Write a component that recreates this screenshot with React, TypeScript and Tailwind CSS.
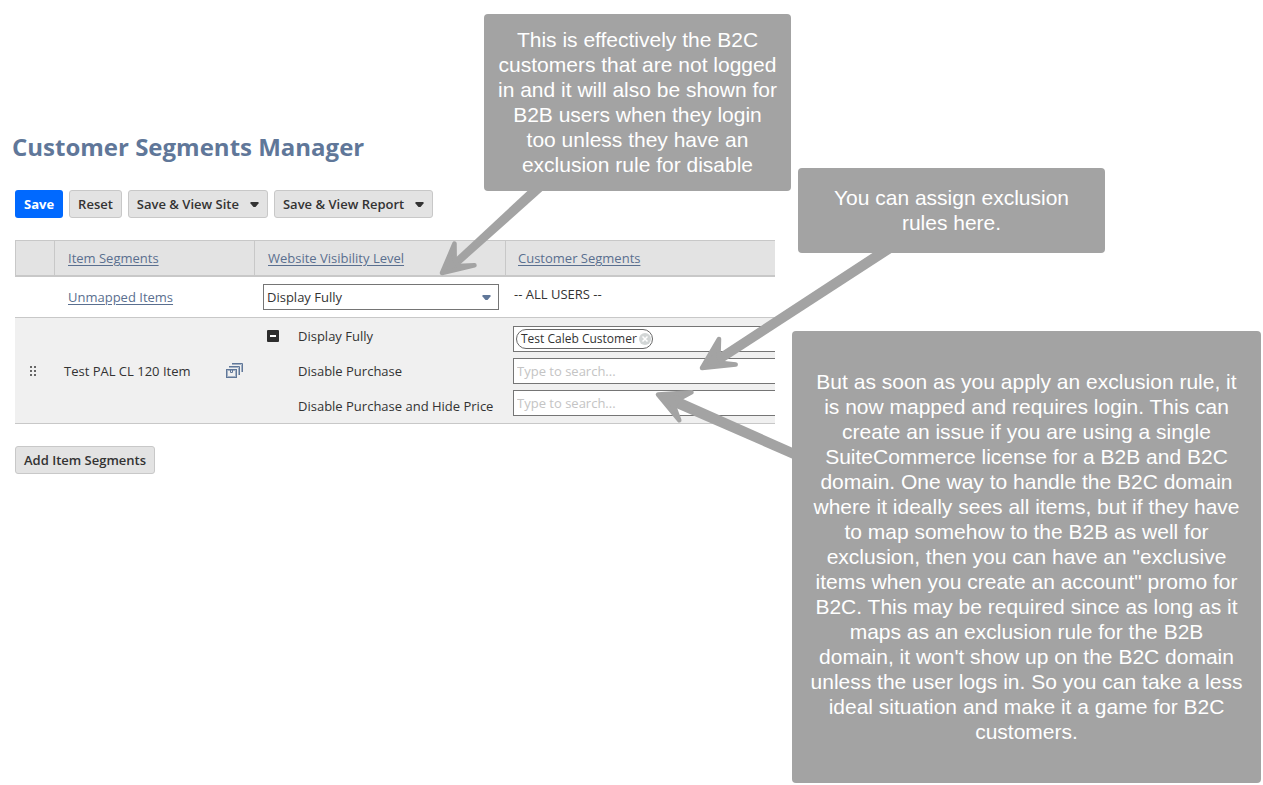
import { useState } from "react";

interface CalloutProps {
  className: string;
  lines: string[];
}

const menuButtons = ["Save & View Site", "Save & View Report"];

const visibilityLevels = ["Display Fully", "Disable Purchase", "Disable Purchase and Hide Price"];

const visibilityNote = [
  "This is effectively the B2C",
  "customers that are not logged",
  "in and it will also be shown for",
  "B2B users when they login",
  "too unless they have an",
  "exclusion rule for disable",
];

const assignNote = ["You can assign exclusion", "rules here."];

const exclusionNote = [
  "But as soon as you apply an exclusion rule, it",
  "is now mapped and requires login. This can",
  "create an issue if you are using a single",
  "SuiteCommerce license for a B2B and B2C",
  "domain. One way to handle the B2C domain",
  "where it ideally sees all items, but if they have",
  "to map somehow to the B2B as well for",
  "exclusion, then you can have an \"exclusive",
  "items when you create an account\" promo for",
  "B2C. This may be required since as long as it",
  "maps as an exclusion rule for the B2B",
  "domain, it won't show up on the B2C domain",
  "unless the user logs in. So you can take a less",
  "ideal situation and make it a game for B2C",
  "customers.",
];

function Caret({ className }: { className: string }) {
  return (
    <svg viewBox="0 0 9 5" className={className} aria-hidden="true">
      <path d="M0.5 0H8.5V1.5L5.5 5H3.5L0.5 1.5Z" fill="currentColor" />
    </svg>
  );
}

function StackIcon() {
  return (
    <svg viewBox="0 0 17 15" className="h-[15px] w-[17px]" fill="none" aria-hidden="true">
      <path d="M6 1.5H15.5V9" stroke="#a3b1c4" />
      <path d="M6 0.5H16.5V9" stroke="#607799" />
      <path d="M3 4.5H12.5V12" stroke="#a3b1c4" />
      <path d="M3 3.5H13.5V12" stroke="#607799" />
      <rect x="1.5" y="7.5" width="8" height="6" stroke="#a3b1c4" />
      <rect x="0.5" y="6.5" width="10" height="8" stroke="#607799" />
      <path d="M4.5 7V9.5H6.5V7" stroke="#607799" />
    </svg>
  );
}

function DragHandle() {
  return (
    <svg viewBox="0 0 6 10" className="h-2.5 w-1.5" fill="#666" aria-hidden="true">
      <path d="M0 0h2v2H0zM4 0h2v2H4zM0 4h2v2H0zM4 4h2v2H4zM0 8h2v2H0zM4 8h2v2H4z" />
    </svg>
  );
}

function Callout({ className, lines }: CalloutProps) {
  return (
    <aside
      className={`absolute flex items-center justify-center rounded bg-[#a3a3a3] pb-0.5 text-center font-['Liberation_Sans',sans-serif] text-[21px] leading-[25px] text-white ${className}`}
    >
      <p className="whitespace-pre-line">{lines.join("\n")}</p>
    </aside>
  );
}

function Arrows() {
  return (
    <svg
      viewBox="0 0 1263 785"
      className="pointer-events-none absolute left-0 top-0 h-[785px] w-[1263px] max-w-none"
      fill="#a3a3a3"
      aria-hidden="true"
    >
      <path d="M528.5 190L543.5 190L460 264.5L448 268L456.5 257Z" />
      <path d="M874 252L893 252L725 361L712 364L720.5 352.5Z" />
      <path d="M793 448L793 459L675.5 407.7L666 398L678.5 397Z" />
      <g stroke="#a3a3a3" strokeWidth="4.5" strokeLinejoin="round">
        <path d="M442 273L454.5 243.5L454.7 260L458 266L474.5 265.3Z" />
        <path d="M702 368L719 339L718.5 356L722 363L735.7 364.5Z" />
        <path d="M658 394.5L691.5 392.3L679 399L674 406L679.3 420.3Z" />
      </g>
    </svg>
  );
}

export default function App() {
  const [visibility, setVisibility] = useState("Display Fully");
  const [expanded, setExpanded] = useState(true);
  const [customers, setCustomers] = useState(["Test Caleb Customer"]);

  const headerLink = "text-[#5a6f8f] underline underline-offset-2";
  const secondaryButton =
    "flex h-7 items-center rounded-[3px] border border-[#c8c8c8] bg-[#e3e3e3] px-2 font-semibold text-[#333]";

  return (
    <div className="relative min-h-screen overflow-hidden bg-white font-['Open_Sans',sans-serif] text-[13px] leading-5 text-[#333]">
      <main className="pl-[15px] pr-[488px] pt-[130px]">
        <h1 className="-ml-[3px] text-2xl leading-[34px] font-bold text-[#607799]">Customer Segments Manager</h1>

        <div className="mt-[26px] flex gap-1.5">
          <button type="button" className="h-7 rounded-[3px] bg-[#0069ff] px-[9px] font-bold text-white">
            Save
          </button>
          <button type="button" className={secondaryButton}>
            Reset
          </button>
          {menuButtons.map((label) => (
            <button key={label} type="button" aria-haspopup="menu" className={secondaryButton}>
              {label}
              <Caret className="ml-[11px] h-[5px] w-[9px]" />
            </button>
          ))}
        </div>

        <table className="mt-[22px] w-full table-fixed border-separate border-spacing-0">
          <colgroup>
            <col className="w-[39px]" />
            <col className="w-[200px]" />
            <col className="w-[251px]" />
            <col />
          </colgroup>
          <thead>
            <tr className="h-[37px] bg-[#e3e3e3] text-left *:border-t *:border-b-2 *:border-[#c8c8c8] *:font-normal">
              <th className="border-l" aria-label="Order" />
              <th className="border-l pl-[13px]">
                <a href="#item-segments" className={headerLink}>Item Segments</a>
              </th>
              <th className="border-l pl-[13px]">
                <a href="#visibility" className={headerLink}>Website Visibility Level</a>
              </th>
              <th className="border-l pl-3">
                <a href="#customer-segments" className={headerLink}>Customer Segments</a>
              </th>
            </tr>
          </thead>
          <tbody>
            <tr className="h-[41px] *:border-b *:border-[#c8c8c8]">
              <td />
              <td className="pl-3.5">
                <a href="#unmapped" className={headerLink}>Unmapped Items</a>
              </td>
              <td className="pl-[9px]">
                <div className="relative w-[236px]">
                  <select
                    aria-label="Website Visibility Level"
                    value={visibility}
                    onChange={(e) => setVisibility(e.target.value)}
                    className="block h-[26px] w-full appearance-none border border-[#757575] bg-white pl-[3px]"
                  >
                    {visibilityLevels.map((level) => (
                      <option key={level}>{level}</option>
                    ))}
                  </select>
                  <Caret className="pointer-events-none absolute right-2 top-[11px] h-[5px] w-[9px] text-[#607799]" />
                </div>
              </td>
              <td className="pb-1.5 pl-[9px]">-- ALL USERS --</td>
            </tr>
            <tr className="h-[106px] bg-[#f0f0f0] *:border-b *:border-[#c8c8c8]">
              <td className="pl-[15px]">
                <DragHandle />
              </td>
              <td className="pl-2.5">
                <div className="flex items-center justify-between pr-[11px]">
                  Test PAL CL 120 Item
                  <button type="button" aria-label="Select items">
                    <StackIcon />
                  </button>
                </div>
              </td>
              <td>
                <div className="flex pl-[13px]">
                  <div className="flex h-[35px] w-[31px] items-center">
                    <button
                      type="button"
                      aria-label="Toggle levels"
                      aria-expanded={expanded}
                      onClick={() => setExpanded(!expanded)}
                      className="flex size-3 items-center justify-center rounded-[1px] bg-[#2d2d2d]"
                    >
                      <span className="h-0.5 w-1.5 bg-white" />
                    </button>
                  </div>
                  <ul>
                    {visibilityLevels.map((level) => (
                      <li key={level} className="flex h-[35px] items-center whitespace-nowrap">
                        {level}
                      </li>
                    ))}
                  </ul>
                </div>
              </td>
              <td className="pl-2">
                <div className="flex flex-col gap-1.5 *:h-[26px] *:border *:border-r-0 *:border-[#757575] *:bg-white">
                  <div className="flex items-center pl-0.5">
                    {customers.map((customer) => (
                      <span
                        key={customer}
                        className="flex h-5 shrink-0 items-center gap-0.5 rounded-full border border-[#666] pl-1 pr-px text-xs"
                      >
                        {customer}
                        <button
                          type="button"
                          aria-label={`Remove ${customer}`}
                          onClick={() => setCustomers(customers.filter((c) => c !== customer))}
                        >
                          <svg viewBox="0 0 12 12" className="size-3" aria-hidden="true">
                            <circle cx="6" cy="6" r="6" fill="#d2d6d6" />
                            <path d="M3.5 3.5L8.5 8.5M8.5 3.5L3.5 8.5" stroke="#fff" strokeWidth="1.5" />
                          </svg>
                        </button>
                      </span>
                    ))}
                    <input aria-label="Display Fully segments" className="min-w-0 flex-1 outline-none" />
                  </div>
                  <input
                    aria-label="Disable Purchase segments"
                    placeholder="Type to search..."
                    className="w-full pl-[3px] placeholder:text-[#c4c4c4]"
                  />
                  <input
                    aria-label="Disable Purchase and Hide Price segments"
                    placeholder="Type to search..."
                    className="w-full pl-[3px] placeholder:text-[#c4c4c4]"
                  />
                </div>
              </td>
            </tr>
          </tbody>
        </table>

        <button type="button" className={`mt-[22px] ${secondaryButton}`}>
          Add Item Segments
        </button>
      </main>

      <Arrows />
      <Callout className="left-[484px] top-3.5 h-[177px] w-[307px]" lines={visibilityNote} />
      <Callout className="left-[798px] top-[168px] h-[85px] w-[307px]" lines={assignNote} />
      <Callout className="left-[792px] top-[331px] h-[452px] w-[469px]" lines={exclusionNote} />
    </div>
  );
}
